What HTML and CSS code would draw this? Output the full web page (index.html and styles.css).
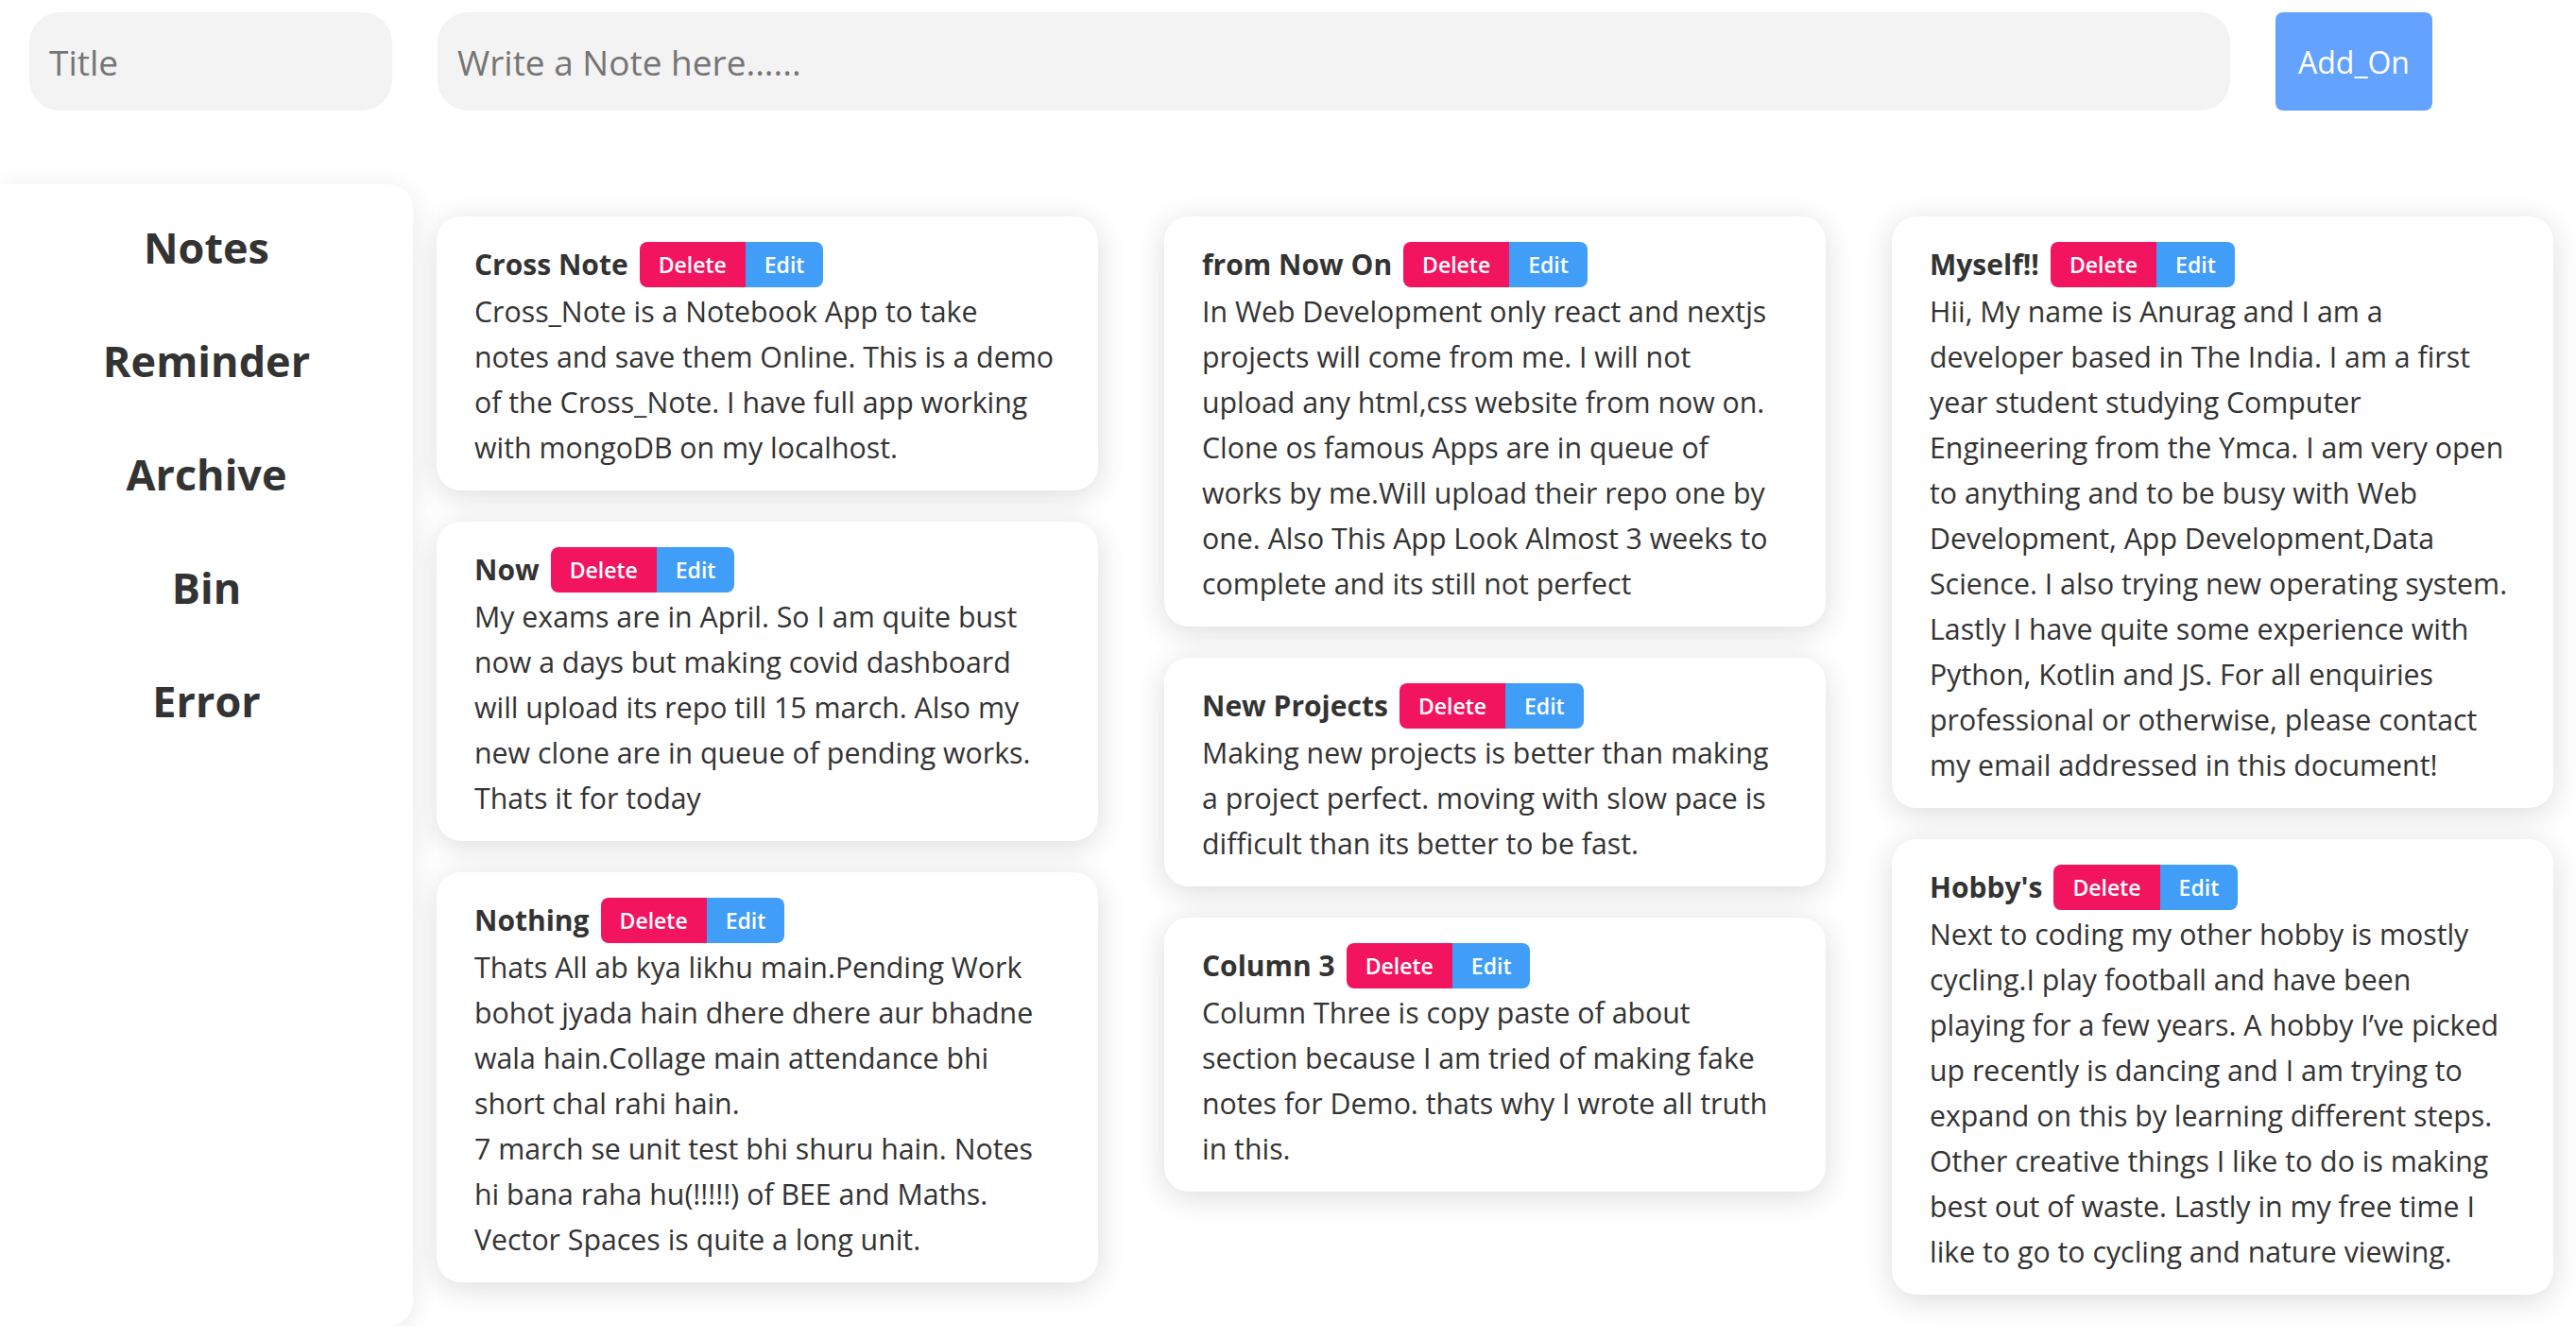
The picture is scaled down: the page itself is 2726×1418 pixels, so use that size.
FILE: index.html
```html
<!DOCTYPE html>
<html lang="en">
<head>
<meta charset="utf-8">
<title>Cross Note</title>
<link rel="stylesheet" href="styles.css">
</head>
<body>
<header class="composer">
  <input class="field field-title" type="text" placeholder="Title">
  <input class="field field-note" type="text" placeholder="Write a Note here......">
  <button class="add-btn" type="button">Add_On</button>
</header>
<div class="main">
  <nav class="sidebar">
    <a class="nav-item" href="#">Notes</a>
    <a class="nav-item" href="#">Reminder</a>
    <a class="nav-item" href="#">Archive</a>
    <a class="nav-item" href="#">Bin</a>
    <a class="nav-item" href="#">Error</a>
  </nav>
  <section class="notes">
    <div class="col">
      <article class="card">
        <div class="card-head"><h3 class="card-title">Cross Note</h3><div class="actions"><button class="btn btn-del">Delete</button><button class="btn btn-edit">Edit</button></div></div>
        <p class="card-text">Cross_Note is a Notebook App to take<br>notes and save them Online. This is a demo<br>of the Cross_Note. I have full app working<br>with mongoDB on my localhost.</p>
      </article>
      <article class="card">
        <div class="card-head"><h3 class="card-title">Now</h3><div class="actions"><button class="btn btn-del">Delete</button><button class="btn btn-edit">Edit</button></div></div>
        <p class="card-text">My exams are in April. So I am quite bust<br>now a days but making covid dashboard<br>will upload its repo till 15 march. Also my<br>new clone are in queue of pending works.<br>Thats it for today</p>
      </article>
      <article class="card">
        <div class="card-head"><h3 class="card-title">Nothing</h3><div class="actions"><button class="btn btn-del">Delete</button><button class="btn btn-edit">Edit</button></div></div>
        <p class="card-text">Thats All ab kya likhu main.Pending Work<br>bohot jyada hain dhere dhere aur bhadne<br>wala hain.Collage main attendance bhi<br>short chal rahi hain.<br>7 march se unit test bhi shuru hain. Notes<br>hi bana raha hu(!!!!!) of BEE and Maths.<br>Vector Spaces is quite a long unit.</p>
      </article>
    </div>
    <div class="col">
      <article class="card">
        <div class="card-head"><h3 class="card-title">from Now On</h3><div class="actions"><button class="btn btn-del">Delete</button><button class="btn btn-edit">Edit</button></div></div>
        <p class="card-text">In Web Development only react and nextjs<br>projects will come from me. I will not<br>upload any html,css website from now on.<br>Clone os famous Apps are in queue of<br>works by me.Will upload their repo one by<br>one. Also This App Look Almost 3 weeks to<br>complete and its still not perfect</p>
      </article>
      <article class="card">
        <div class="card-head"><h3 class="card-title">New Projects</h3><div class="actions"><button class="btn btn-del">Delete</button><button class="btn btn-edit">Edit</button></div></div>
        <p class="card-text">Making new projects is better than making<br>a project perfect. moving with slow pace is<br>difficult than its better to be fast.</p>
      </article>
      <article class="card">
        <div class="card-head"><h3 class="card-title">Column 3</h3><div class="actions"><button class="btn btn-del">Delete</button><button class="btn btn-edit">Edit</button></div></div>
        <p class="card-text">Column Three is copy paste of about<br>section because I am tried of making fake<br>notes for Demo. thats why I wrote all truth<br>in this.</p>
      </article>
    </div>
    <div class="col">
      <article class="card">
        <div class="card-head"><h3 class="card-title">Myself!!</h3><div class="actions"><button class="btn btn-del">Delete</button><button class="btn btn-edit">Edit</button></div></div>
        <p class="card-text">Hii, My name is Anurag and I am a<br>developer based in The India. I am a first<br>year student studying Computer<br>Engineering from the Ymca. I am very open<br>to anything and to be busy with Web<br>Development, App Development,Data<br>Science. I also trying new operating system.<br>Lastly I have quite some experience with<br>Python, Kotlin and JS. For all enquiries<br>professional or otherwise, please contact<br>my email addressed in this document!</p>
      </article>
      <article class="card">
        <div class="card-head"><h3 class="card-title">Hobby's</h3><div class="actions"><button class="btn btn-del">Delete</button><button class="btn btn-edit">Edit</button></div></div>
        <p class="card-text">Next to coding my other hobby is mostly<br>cycling.I play football and have been<br>playing for a few years. A hobby I’ve picked<br>up recently is dancing and I am trying to<br>expand on this by learning different steps.<br>Other creative things I like to do is making<br>best out of waste. Lastly in my free time I<br>like to go to cycling and nature viewing.</p>
      </article>
    </div>
  </section>
</div>
</body>
</html>
```

FILE: styles.css
```css
* { box-sizing: border-box; }

html, body {
  margin: 0;
  padding: 0;
  background: #ffffff;
}

body {
  font-family: "Open Sans", "Noto Sans", "Liberation Sans", sans-serif;
  color: #333333;
  overflow: hidden;
}

.composer {
  display: flex;
  align-items: center;
  gap: 48px;
  padding: 13px 0 0 31px;
}

.field {
  height: 104px;
  border: none;
  outline: none;
  background: #f3f3f3;
  border-radius: 32px;
  padding: 0 21px;
  font-family: inherit;
  font-size: 37px;
  color: #333;
}

.field::placeholder {
  color: #757575;
}

.field-title { width: 384px; }
.field-note { width: 1897px; }

.add-btn {
  width: 166px;
  height: 104px;
  border: none;
  border-radius: 8px;
  background: #63a2ff;
  color: #ffffff;
  font-family: inherit;
  font-size: 32px;
  padding: 0;
}

.main {
  display: flex;
  align-items: flex-start;
  gap: 25px;
  margin-top: 78px;
}

.sidebar {
  width: 437px;
  height: 1208px;
  flex: none;
  background: #ffffff;
  border-radius: 0 26px 26px 0;
  box-shadow: 0 4px 28px rgba(0, 0, 0, 0.09);
  display: flex;
  flex-direction: column;
  align-items: center;
  gap: 60px;
  padding-top: 37px;
}

.nav-item {
  font-size: 45px;
  font-weight: 700;
  line-height: 60px;
  color: #333333;
  text-decoration: none;
}

.notes {
  display: grid;
  grid-template-columns: repeat(3, 700px);
  column-gap: 70px;
  align-items: start;
  padding-top: 34px;
}

.col {
  display: flex;
  flex-direction: column;
  gap: 33px;
}

.card {
  background: #ffffff;
  border-radius: 26px;
  padding: 27px 20px 21px 40px;
  box-shadow: 0 6px 32px rgba(0, 0, 0, 0.14);
}

.card-head {
  display: flex;
  align-items: center;
  gap: 12px;
  height: 48px;
}

.card-title {
  margin: 0;
  font-size: 30px;
  font-weight: 700;
  line-height: 48px;
  color: #333333;
}

.actions {
  display: flex;
}

.btn {
  height: 48px;
  border: none;
  padding: 0 20px;
  font-family: inherit;
  font-size: 23px;
  font-weight: 600;
  color: #ffffff;
}

.btn-del {
  background: #f2145f;
  border-radius: 8px 0 0 8px;
}

.btn-edit {
  background: #409ef9;
  border-radius: 0 8px 8px 0;
}

.card-text {
  margin: 0;
  padding-top: 2px;
  font-size: 30.3px;
  line-height: 48px;
  color: #333333;
  white-space: nowrap;
}
```
